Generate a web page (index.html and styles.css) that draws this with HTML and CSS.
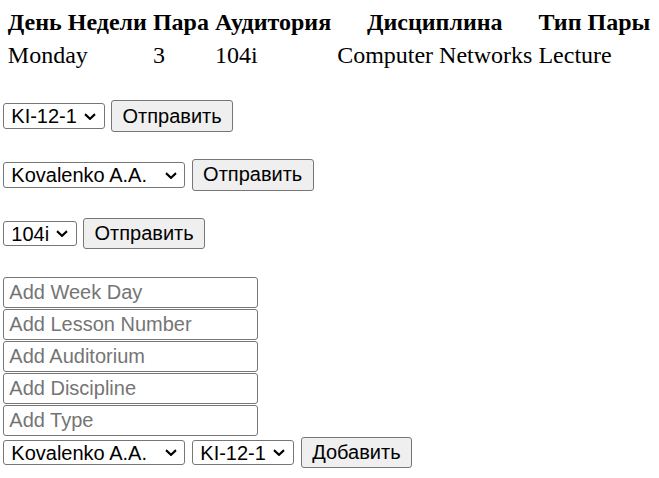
FILE: index.html
```html
<!DOCTYPE html>
<html lang="ru">
<head>
<meta charset="utf-8">
<title>Расписание</title>
<link rel="stylesheet" href="styles.css">
</head>
<body>
<table class="schedule">
  <tr><th>День Недели</th><th>Пара</th><th>Аудитория</th><th>Дисциплина</th><th>Тип Пары</th></tr>
  <tr><td>Monday</td><td>3</td><td>104i</td><td>Computer Networks</td><td>Lecture</td></tr>
</table>

<form class="filter">
  <select class="sel sel-group"><option>KI-12-1</option></select>
  <button class="btn" type="button">Отправить</button>
</form>

<form class="filter">
  <select class="sel sel-teacher"><option>Kovalenko A.A.</option></select>
  <button class="btn" type="button">Отправить</button>
</form>

<form class="filter">
  <select class="sel sel-room"><option>104i</option></select>
  <button class="btn" type="button">Отправить</button>
</form>

<form class="add-form">
  <input class="field" type="text" placeholder="Add Week Day">
  <input class="field" type="text" placeholder="Add Lesson Number">
  <input class="field" type="text" placeholder="Add Auditorium">
  <input class="field" type="text" placeholder="Add Discipline">
  <input class="field" type="text" placeholder="Add Type">
  <div class="add-row">
    <select class="sel sel-teacher"><option>Kovalenko A.A.</option></select>
    <select class="sel sel-group"><option>KI-12-1</option></select>
    <button class="btn" type="button">Добавить</button>
  </div>
</form>
</body>
</html>
```

FILE: styles.css
```css
body {
  margin: 0;
  padding: 4px 3.3px;
  font-family: "Liberation Serif", "Times New Roman", serif;
  color: #000;
  background: #fff;
}

.schedule {
  font-size: 24px;
  border-spacing: 3px;
  margin-left: 0;
}

.schedule th,
.schedule td {
  padding: 1.5px;
}

.schedule th {
  text-align: center;
  font-weight: bold;
}

.filter {
  display: flex;
  align-items: center;
  gap: 6.3px;
  margin: 27.4px 0 0;
}

.sel {
  -webkit-appearance: none;
  appearance: none;
  box-sizing: border-box;
  height: 25.6px;
  font: 20px "Liberation Sans", Arial, sans-serif;
  color: #000;
  border: 1px solid #767676;
  border-radius: 3px;
  padding: 0 0 0 7px;
  background-color: #fff;
  background-image: url("data:image/svg+xml;utf8,<svg xmlns='http://www.w3.org/2000/svg' viewBox='0 0 12 6.5'><path d='M1 1 L6 5.5 L11 1' fill='none' stroke='black' stroke-width='2'/></svg>");
  background-repeat: no-repeat;
  background-size: 12px 6.5px;
  background-position: right 7.5px center;
}

.sel-group { width: 101.4px; }
.sel-teacher { width: 182px; }
.sel-room { width: 73.4px; }

.btn {
  box-sizing: border-box;
  height: 31.4px;
  font: 20px "Liberation Sans", Arial, sans-serif;
  color: #000;
  background: #efefef;
  border: 1px solid #767676;
  border-radius: 3px;
  padding: 0 10.5px;
}

.add-form {
  margin: 27.6px 0 0;
}

.field {
  display: block;
  box-sizing: border-box;
  width: 254.4px;
  height: 31.3px;
  margin: 0 0 0.7px;
  font: 20px "Liberation Sans", Arial, sans-serif;
  border: 1px solid #767676;
  border-radius: 3px;
  padding: 0 5px;
  background: #fff;
}

.field::placeholder {
  color: #757575;
}

.add-row {
  display: flex;
  align-items: center;
  gap: 7px;
}
```
